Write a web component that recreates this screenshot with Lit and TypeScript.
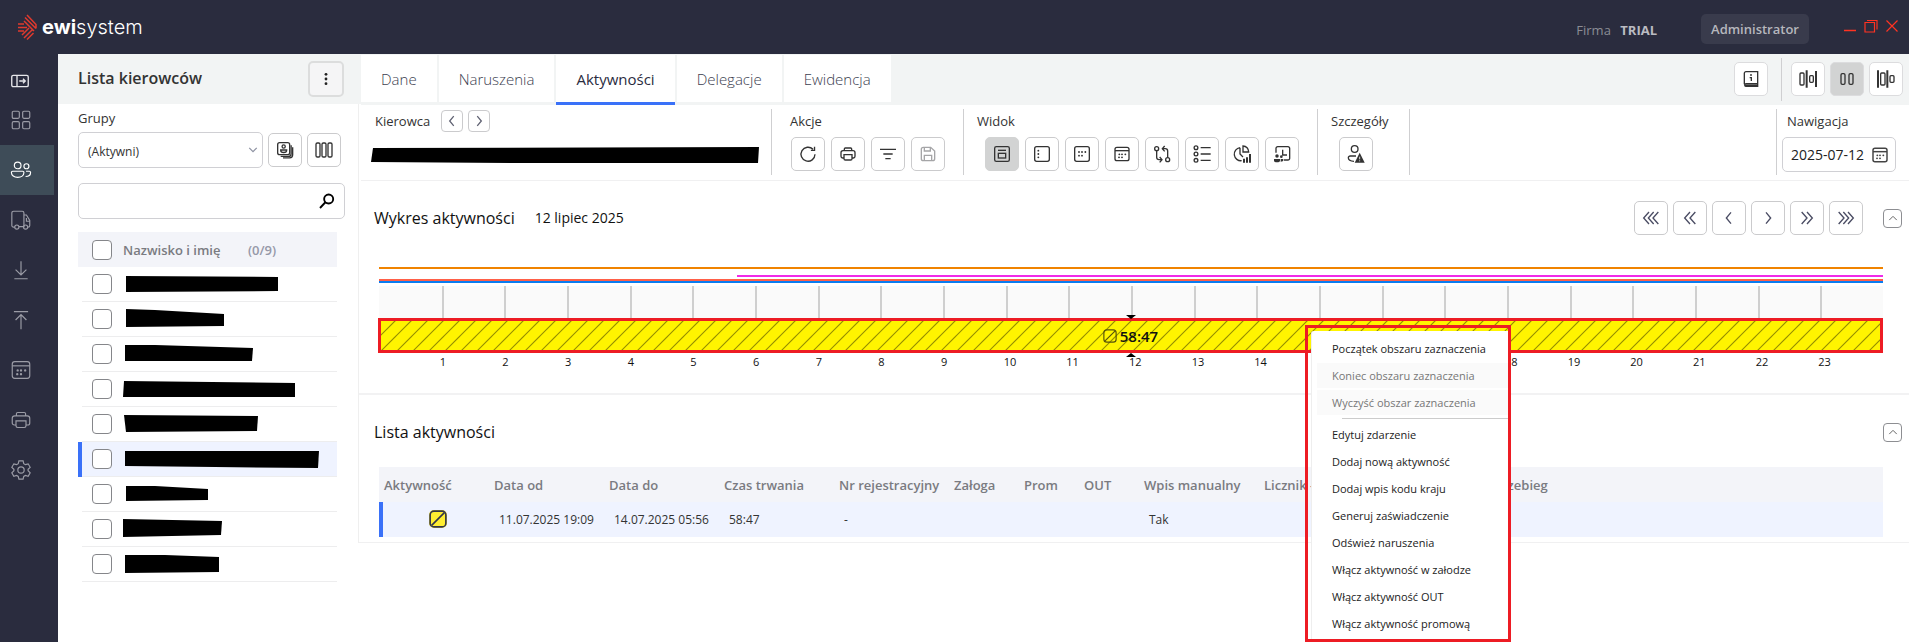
import { LitElement, html, css, svg, type TemplateResult } from "lit";
import { customElement, property, state } from "lit/decorators.js";
import { classMap } from "lit/directives/class-map.js";

/* Icon artwork, drawn on a 24 x 24 grid. */
const icons: Record<string, TemplateResult> = {
  expand: svg`<rect x="1" y="4.500" width="22" height="15" rx="2"/><path d="M8 4.500v15M11 12h8M16 9l3 3-3 3"/>`,
  grid: svg`<rect x="1.500" y="1.500" width="8.500" height="8.500" rx="1.500"/><rect x="14" y="1.500" width="8.500" height="8.500" rx="1.500"/><rect x="1.500" y="14" width="8.500" height="8.500" rx="1.500"/><rect x="14" y="14" width="8.500" height="8.500" rx="1.500"/>`,
  people: svg`<circle cx="8" cy="6.500" r="4"/><circle cx="18.500" cy="7.500" r="3"/><path d="M2 13.500h12a1.500 1.500 0 0 1 1.500 1.500c0 3.500-3.200 5.800-7.500 5.800S.5 18.500.5 15A1.500 1.500 0 0 1 2 13.500zM18 13.500h4a1.500 1.500 0 0 1 1.500 1.500c0 3-2.200 4.800-6 4.800"/>`,
  truck: svg`<path d="M4.500 20.500H3a2 2 0 0 1-2-2v-15a2 2 0 0 1 2-2h10.500a2 2 0 0 1 2 2v16.500H9.500M15.500 6h3l4 6.500v6a2 2 0 0 1-2 2M18.500 9.500v4h4"/><circle cx="7" cy="20.500" r="2.500"/><circle cx="17.500" cy="20.500" r="2.500"/>`,
  download: svg`<path d="M12 1.500v16M5.500 11.500l6.500 6.500 6.500-6.500M4 22.500h16"/>`,
  upload: svg`<path d="M12 23V6M5.500 12L12 5.500l6.500 6.500M3.500 2h17"/>`,
  calendar: svg`<rect x="1.500" y="2" width="21" height="20" rx="3"/><path d="M1.500 7h21"/><path class="dots" d="M8 12.500h.01M12 12.500h.01M17 12.500h.01M7.500 17h.01M12 17h.01"/>`,
  printer: svg`<path d="M6.500 7V4.500a1.500 1.500 0 0 1 1.500-1.500h8a1.500 1.500 0 0 1 1.500 1.500V7M6 18H4a2.500 2.500 0 0 1-2.500-2.500V10a3 3 0 0 1 3-3h15a3 3 0 0 1 3 3v5.500A2.500 2.500 0 0 1 20 18h-2"/><path d="M6 13h12v6a2 2 0 0 1-2 2H8a2 2 0 0 1-2-2z"/>`,
  gear: svg`<circle cx="12" cy="12" r="3.800"/><path d="M9.500 1h5l.8 3.400 2 1.200 3.300-1 2.400 4.200-2.500 2.300v1.800l2.500 2.400-2.400 4.200-3.300-1-2 1.200-.8 3.300h-5l-.8-3.300-2-1.200-3.300 1L1 15.300l2.500-2.400v-1.800L1 8.800l2.400-4.200 3.300 1 2-1.200z"/>`,
  kebab: svg`<g class="solid"><circle cx="12" cy="4" r="2.400"/><circle cx="12" cy="12" r="2.400"/><circle cx="12" cy="20" r="2.400"/></g>`,
  card: svg`<rect x="1" y="1" width="18" height="18" rx="3"/><circle cx="10" cy="6.800" r="2.400"/><path d="M5.500 12h9c0 2.600-2 3.800-4.500 3.800s-4.500-1.200-4.500-3.800zM21.200 5v12.500a4 4 0 0 1-4 4H5.500M23.500 8v11a4.800 4.800 0 0 1-4.500 4.800H9"/>`,
  columns: svg`<rect x="0" y="1.500" width="6" height="21" rx="2"/><rect x="9" y="1.500" width="6" height="21" rx="2"/><rect x="18" y="1.500" width="6" height="21" rx="2"/>`,
  search: svg`<circle cx="14.500" cy="9" r="6.800"/><path d="M10 13.500L1.500 22.500"/>`,
  left: svg`<path d="M15 3.500L8 12l7 8.500"/>`,
  right: svg`<path d="M9 3.500l7 8.500-7 8.500"/>`,
  left2: svg`<path d="M12 3L4 12l8 9M20 3l-8 9 8 9"/>`,
  right2: svg`<path d="M4 3l8 9-8 9M12 3l8 9-8 9"/>`,
  left3: svg`<path d="M9 3L1 12l8 9M16 3l-8 9 8 9M23 3l-8 9 8 9"/>`,
  right3: svg`<path d="M1 3l8 9-8 9M8 3l8 9-8 9M15 3l8 9-8 9"/>`,
  up: svg`<path d="M3 17l9-9 9 9"/>`,
  refresh: svg`<path d="M22.500 12.500A10.500 10.500 0 1 1 19.500 5M21.800 1v5.500h-5.500"/>`,
  filter: svg`<path d="M0 5h24M5 12h14M8 19h8"/>`,
  save: svg`<path d="M2 5a3 3 0 0 1 3-3h11l6 5.500V19a3 3 0 0 1-3 3H5a3 3 0 0 1-3-3zM6.500 2.500v5h9v-5M6.500 22v-8h11v8"/>`,
  panel: svg`<rect x="1" y="1" width="22" height="22" rx="2.500"/><rect x="6.500" y="11" width="11" height="7"/><path d="M6 6.500h12"/>`,
  sidebar: svg`<rect x="1" y="1" width="22" height="22" rx="3"/><path class="dots" d="M6.500 7h.01M6.500 12h.01M6.500 17h.01"/>`,
  dotbox: svg`<rect x="1" y="1" width="22" height="22" rx="3"/><path class="dots" d="M7.500 9h.01M12 9h.01M17 9h.01M7.500 14.500h.01M12 14.500h.01"/>`,
  route: svg`<circle cx="4" cy="4" r="3"/><circle cx="20.500" cy="20.500" r="3"/><path d="M4 7v10a3.500 3.500 0 0 0 3.500 3.500h4M8.500 16.500l3.500 4-3.500 4M20.500 17.500V7.500A3.500 3.500 0 0 0 17 4h-4M16 0l-3.500 4L16 8"/>`,
  list: svg`<circle cx="3" cy="2.500" r="2.800"/><circle cx="3" cy="12" r="2.800"/><circle cx="3" cy="21.500" r="2.800"/><path d="M10 2.500h15M10 12h15M10 21.500h15"/>`,
  report: svg`<path d="M9 2.500A9.800 9.800 0 1 0 11.500 22M9 2.500V12l4.500 4.500"/><path d="M13.500 0C18.500 0 22 4 22 9h-8.500z"/><path class="bold" d="M15 25v-6M19.500 25v-8M24 25V12"/>`,
  clockpeople: svg`<path d="M3 10V3.500A2.500 2.500 0 0 1 5.500 1H21a2.500 2.500 0 0 1 2.500 2.500v15A2.500 2.500 0 0 1 21 21h-6M13 5.500v8h6.500"/><g class="solid"><circle cx="4.500" cy="15" r="2.600"/><circle cx="11" cy="16" r="2"/><path d="M0 19.500h9V22c0 3-9 3-9 0zM10 19.500h4v2c0 1.500-1.500 2-4 2z"/></g>`,
  alertuser: svg`<circle cx="10" cy="4.500" r="5"/><path d="M12 15H3.500A2.800 2.800 0 0 0 .5 17.800C.5 21.500 4 23 9 23"/><path class="solid" d="M17.500 10L25 25H10z"/><path d="M17.500 16v4M17.500 21.500v1.500" stroke="#fff" stroke-width="1.200"/>`,
  info: svg`<path d="M2 20V3.500A2.500 2.500 0 0 1 4.500 1H22v18H4.500a2 2 0 0 0 0 4H22v-4M10 10h2.500v5"/><path class="dots" d="M12 6h.01"/><path class="bold" d="M3 21.500h19"/>`,
  split1: svg`<rect x="0" y="3" width="6" height="18" rx="1.500"/><path class="bold" d="M10 -1v26M24 0v24"/><rect x="14.500" y="7" width="5.500" height="10" rx="1.500"/>`,
  split2: svg`<rect x="3" y="4" width="6" height="16" rx="2"/><rect x="15" y="4" width="6" height="16" rx="2"/>`,
  split3: svg`<path class="bold" d="M0 -1v26M14 -1v26"/><rect x="4" y="3" width="6.500" height="18" rx="1.500"/><rect x="18" y="7" width="6" height="10" rx="1.500"/>`,
  rest: svg`<rect x="1.500" y="1.500" width="21" height="21" rx="5"/><path d="M3.500 20.500l17-17"/>`,
  minimize: svg`<path class="bold" d="M0 21h24"/>`,
  restore: svg`<path d="M0 5h19v19H0z"/><path d="M4 1h20v18"/>`,
  close: svg`<path d="M1 1l22 22M23 1L1 23"/>`,
};

@customElement("ewi-icon")
class EwiIcon extends LitElement {
  @property() name = "";
  static styles = css`
    :host { display: inline-flex; width: var(--icon, 18px); height: var(--icon, 18px); flex: none; }
    svg { width: 100%; height: 100%; overflow: visible; fill: none; stroke: currentColor; stroke-width: var(--stroke, 2); }
    .dots { stroke-width: 2.800; stroke-linecap: round; }
    .bold { stroke-width: 3; }
    .solid { fill: currentColor; stroke: none; }
  `;
  render() {
    return html`<svg viewBox="0 0 24 24" aria-hidden="true">${icons[this.name]}</svg>`;
  }
}

const sideItems = [
  ["expand", "Rozwiń"], ["grid", "Pulpit"], ["people", "Kierowcy"], ["truck", "Pojazdy"], ["download", "Pobierz"],
  ["upload", "Wyślij"], ["calendar", "Kalendarz"], ["printer", "Wydruki"], ["gear", "Ustawienia"],
];
const tabs = ["Dane", "Naruszenia", "Aktywności", "Delegacje", "Ewidencja"];
/* Blacked-out names: polygon corners inside each list row. */
const drivers = [
  "1,9 153,10 153,24 1,25",
  "1,7 30,8 99,12 99,24 1,25",
  "0,8 30,8 128,11 127,24 0,24",
  "-1,9 170,11 170,25 -2,25",
  "-1,8 133,9 132,24 1,25",
  "0,9 194,9 193,26 90,25 0,24",
  "1,9 30,9 83,12 83,23 1,24",
  "-2,7 97,9 96,23 -2,25",
  "0,8 40,8 94,10 94,25 0,26",
];
const actions = [["refresh", "Odśwież"], ["printer", "Drukuj"], ["filter", "Filtruj"], ["save", "Zapisz"]];
const views = ["panel", "sidebar", "dotbox", "calendar", "route", "list", "report", "clockpeople"];
const hours = Array.from({ length: 24 }, (_, i) => i);
const headings = ["Aktywność", "Data od", "Data do", "Czas trwania", "Nr rejestracyjny", "Załoga", "Prom", "OUT", "Wpis manualny", "Licznik –", "", "Przebieg"];
const cells = ["11.07.2025 19:09", "14.07.2025 05:56", "58:47", "-", "", "", "", "Tak", "", "", ""];
const menu = [
  { text: "Początek obszaru zaznaczenia" },
  { text: "Koniec obszaru zaznaczenia", off: true },
  { text: "Wyczyść obszar zaznaczenia", off: true, end: true },
  { text: "Edytuj zdarzenie" },
  { text: "Dodaj nową aktywność" },
  { text: "Dodaj wpis kodu kraju" },
  { text: "Generuj zaświadczenie" },
  { text: "Odśwież naruszenia" },
  { text: "Włącz aktywność w załodze" },
  { text: "Włącz aktywność OUT" },
  { text: "Włącz aktywność promową" },
];

@customElement("app-root")
class AppRoot extends LitElement {
  @state() private tab = 2;
  @state() private view = 0;

  static styles = css`
    :host {
      display: flex; flex-direction: column; position: relative; min-height: 100vh; background: #fff; color: #222;
      font-family: "Open Sans", "Noto Sans", sans-serif; font-size: 13px; line-height: 20px;
    }
    *, *::before, *::after { box-sizing: border-box; }
    button, input, select { font: inherit; color: inherit; margin: 0; }
    button { padding: 0; border: 0; background: none; display: flex; align-items: center; justify-content: center; }
    h1, h2 { margin: 0; font-weight: 400; }
    .top { height: 54px; background: #2a2c3e; display: flex; align-items: center; padding: 0 11px 0 17px; }
    .logo { display: flex; align-items: center; gap: 5px; flex: 1; color: #fff; font: 300 20px/24px Inter, sans-serif; }
    .logo svg { width: 20px; height: 26px; stroke: #e03a2e; stroke-width: 1.500; fill: none; }
    .logo b { font-weight: 700; }
    .firm { color: #8b8c95; padding-top: 6px; margin-right: 44px; }
    .firm b { color: #bbbcc2; margin-left: 6px; font-weight: 700; }
    .admin { height: 30px; width: 108px; border-radius: 5px; background: #393b4c; color: #b6b7bd; font-weight: 600; margin: 4px 34px 0 0; }
    .wins { display: flex; gap: 8px; margin-top: -2px; color: #ff3322; --icon: 12px; --stroke: 2.400; }
    .wins button { width: 13px; height: 13px; }

    .body { display: flex; flex: 1; }
    .side { width: 58px; background: #2a2c3e; color: #9b9ca6; flex: none; display: flex; flex-direction: column; padding-top: 2px; --icon: 20px; --stroke: 1.400; }
    .side button { width: 54px; height: 50px; padding-right: 12px; }
    .side button:first-child { height: 39px; margin-top: 5px; color: #e6e6ea; --icon: 18px; --stroke: 1.800; margin-bottom: -5px; padding-right: 14px; }
    .side .on { background: #3e4c58; color: #fff; }

    .list { width: 303px; flex: none; }
    .listhead { height: 50px; background: #f2f4f4; display: flex; align-items: center; justify-content: space-between; padding: 0 17px 0 20px; }
    .listhead h1 { font-size: 16px; font-weight: 600; color: #333; line-height: 24px; padding-bottom: 2px; }
    .kebab { width: 36px; height: 36px; border: 2px solid #dcdddd; border-radius: 5px; background: #f5f5f6; --icon: 14px; }
    .listbody { border-right: 1px solid #efefef; width: 301px; padding: 4px 12px 0 20px; height: 439px; }
    .listbody label { display: block; color: #333; height: 20px; }
    .group { display: grid; grid-template-columns: 185px 34px 34px; gap: 5px; align-items: center; margin-top: 4px; }
    .pick { position: relative; display: flex; }
    .pick select { appearance: none; width: 100%; height: 36px; border: 1px solid #d0d0d4; border-radius: 5px; background: #fff; padding: 3px 9px 0; font-size: 12px; color: #333; }
    .pick ewi-icon { position: absolute; right: 5px; top: 13px; transform: rotate(180deg); color: #8f93a3; --icon: 10px; --stroke: 3; }
    .btn { width: 34px; height: 34px; border: 1px solid #cbcbcd; border-radius: 5px; background: #fff; color: #333; --icon: 16px; }
    .btn.on { background: #d2d3d3; border-color: #d2d3d3; }
    .btn:disabled { color: #a5a5a7; }
    .find { display: flex; align-items: center; height: 36px; margin-top: 15px; border: 1px solid #d0d0d4; border-radius: 5px; width: 267px; padding-right: 9px; color: #000; --icon: 16px; --stroke: 2.800; }
    .find input { border: 0; outline: 0; background: none; flex: 1; min-width: 0; height: 30px; padding: 0 9px; }
    .names { border-collapse: separate; border-spacing: 0; table-layout: fixed; width: 259px; margin-top: 13px; }
    .names th, .names td { height: 35px; padding: 0; text-align: left; }
    .names th { background: #f3f4f9; color: #7a7b81; font-weight: 600; }
    .names .count { color: #9698a8; width: 89px; }
    .names td + td { border-bottom: 1px solid #ededee; }
    .names .mark { width: 4px; }
    .names .tick { width: 41px; padding-left: 10px; }
    .names .sel td { background: #eff3ff; }
    .names .sel .mark { background: #3a71f8; }
    .names svg { display: block; width: 100%; height: 34px; overflow: visible; }
    .tick input { appearance: none; display: block; width: 20px; height: 20px; border: 1px solid #85868a; border-radius: 4px; background: #fff; }

    .main { flex: 1; min-width: 0; }
    .tabs { height: 50px; background: #f2f4f4; display: flex; align-items: center; padding-right: 6px; }
    .tablist { display: flex; gap: 2px; align-self: flex-start; flex: 1; padding-top: 1px; }
    .tablist button { height: 47px; background: #fff; padding: 0 20px; color: #3c3e50; font-size: 15px; font-weight: 300; }
    .tablist .on { height: 50px; border-bottom: 3px solid #3a71f8; font-weight: 400; color: #2a2c3e; }
    .rule { width: 1px; background: #cfcfd1; align-self: stretch; }
    .tabs .rule { margin: 4px 9px 3px 13px; }
    .tabs .btn { border-color: #dcdcde; }
    .splits { display: flex; gap: 5px; }
    .tools { height: 77px; border-top: 1px solid #f2f4f4; display: flex; padding: 4px 13px 5px 10px; border-bottom: 1px solid #f0f0f1; }
    .tool { display: flex; flex-direction: column; }
    .cap { height: 24px; display: flex; align-items: center; gap: 5px; color: #333; }
    .cap span { margin-right: 6px; }
    .mini { width: 22px; height: 22px; border: 1px solid #cbcbcd; border-radius: 4px; --icon: 14px; color: #5f6172; --stroke: 2.200; }
    .row { display: flex; gap: 6px; margin-top: 4px; }
    .driver { width: 400px; padding-left: 4px; }
    .driver svg { display: block; width: 390px; height: 18px; margin: 13px 0 0 -4px; }
    .act { padding: 0 18px 0 18px; }
    .act .row { padding-left: 1px; }
    .wid { padding: 0 18px 0 13px; }
    .wid .row { padding-left: 8px; }
    .det { width: 91px; padding-left: 13px; }
    .det .row { padding-left: 8px; }
    .gap { flex: 1; }
    .nav { padding-left: 5px; }
    .nav .cap { padding-left: 5px; }
    .date { display: flex; align-items: center; width: 114px; height: 35px; border: 1px solid #d0d0d4; border-radius: 5px; margin-top: 4px; padding-right: 7px; color: #444; --icon: 16px; --stroke: 2.200; }
    .date input { border: 0; outline: 0; background: none; flex: 1; min-width: 0; padding: 0 0 0 8px; font-size: 14px; color: #222; }

    .sec { margin-left: -2px; padding: 0 26px 0 20px; }
    .sechead { display: flex; align-items: center; color: #111; margin: 0 -19px 0 -5px; }
    .sechead h2 { font-size: 16px; line-height: 24px; }
    .day { font-size: 14px; margin-left: 20px; }
    .jump { display: flex; gap: 5px; margin: 0 20px 0 auto; }
    .jump .btn { color: #4a4c63; }
    .fold { width: 19px; height: 19px; border: 1px solid #8d8e92; border-radius: 4px; --icon: 10px; --stroke: 2.400; color: #666; }
    .chartsec { height: 214px; padding-top: 20px; border-bottom: 2px solid #f2f2f3; }
    .chart { position: relative; margin-top: 32px; }
    .line { height: 2px; }
    .orange { background: #f08300; }
    .pink { background: #f02ae8; margin: 6px 0 2px; }
    .red { background: #ff6048; }
    .blue { background: #0a7cf0; margin-bottom: 3px; }
    .scale { display: grid; grid-template-columns: repeat(24, 1fr); }
    .ticks { height: 32px; background: #fafafa; }
    .ticks i + i { border-left: 2px solid #cfcfcf; }
    .span { position: relative; height: 35px; border: 3px solid #ed1c24; background: #fff400; margin-left: -1px; }
    .span svg { display: block; width: 100%; height: 29px; }
    .dur { position: absolute; inset: 0; display: flex; align-items: center; justify-content: center; gap: 3px; color: #111; font-size: 15px; font-weight: 600; --icon: 14px; }
    .dur ewi-icon { color: #55520a; }
    .arrow { position: absolute; left: 50%; margin-left: -5px; border: 5px solid transparent; }
    .arrow.a { top: 48px; border-top-color: #000; border-bottom: 0; border-top-width: 4px; }
    .arrow.b { top: 86px; border-bottom-color: #000; border-top: 0; border-bottom-width: 4px; }
    .nums { font-size: 11px; line-height: 16px; color: #111; margin: 1px 2px 0 -2px; }
    .listsec { padding-top: 25px; padding-bottom: 5px; border-bottom: 1px solid #f0f0f1; }
    .acts { width: 100%; margin-top: 23px; border-collapse: separate; border-spacing: 0; table-layout: fixed; }
    .acts th, .acts td { height: 35px; text-align: left; white-space: nowrap; overflow: visible; }
    .acts th { padding: 0 0 0 5px; background: #f3f4f9; color: #7a7b81; font-weight: 600; }
    .acts td { padding: 1px 0 0 10px; background: #eff3ff; color: #333; font-size: 12px; }
    .acts td:first-child { border-left: 4px solid #3a71f8; padding: 0 0 0 46px; }
    .acts .chip { display: block; background: #ffee32; border-radius: 5px; color: #33354a; --icon: 18px; --stroke: 2.200; margin-bottom: 2px; }
    .c60 { width: 60px; } .c70 { width: 70px; } .c110 { width: 110px; } .c115 { width: 115px; } .c120 { width: 120px; }

    .menu { position: absolute; left: 1305px; top: 325px; width: 206px; border: 3px solid #ed1c24; padding: 3px 0 0 3px; }
    .menu ul { list-style: none; margin: 0; padding: 5px 0 1px 5px; background: #fff; border-left: 1px solid #eee; border-top-left-radius: 3px; }
    .menu button { width: 100%; height: 25px; margin-bottom: 2px; padding-left: 15px; justify-content: flex-start; font-size: 11px; color: #222; }
    .menu button:disabled { background: #fafafa; color: #777; }
    .menu .end { border-bottom: 1px solid #ccc; margin: 0 0 3px 25px; height: 2px; }
  `;

  private iconBtn(name: string, label: string, cls = "btn", off = false) {
    return html`<button class=${cls} aria-label=${label} ?disabled=${off}><ewi-icon name=${name}></ewi-icon></button>`;
  }

  private top() {
    return html`<header class="top">
      <div class="logo">
        <svg viewBox="0 0 20 26"><path d="M10 1l9 9.500v4M8 3.500l11 11M7 7l10 10M10 25.500l6.500-6.500M7 24l9-9M5 21l7-7M1 10h6M1 13.500h9M1 17h6"/></svg>
        <span><b>ewi</b>system</span>
      </div>
      <div class="firm">Firma <b>TRIAL</b></div>
      <button class="admin">Administrator</button>
      <div class="wins">${this.iconBtn("minimize", "Minimalizuj", "win")}${this.iconBtn("restore", "Przywróć", "win")}${this.iconBtn("close", "Zamknij", "win")}</div>
    </header>`;
  }

  private list() {
    return html`<section class="list">
      <div class="listhead"><h1>Lista kierowców</h1>${this.iconBtn("kebab", "Więcej", "kebab")}</div>
      <div class="listbody">
        <label for="grp">Grupy</label>
        <div class="group">
          <div class="pick"><select id="grp"><option>(Aktywni)</option></select><ewi-icon name="up"></ewi-icon></div>
          ${this.iconBtn("card", "Karty")}${this.iconBtn("columns", "Kolumny")}
        </div>
        <div class="find"><input type="text" aria-label="Szukaj" /><button aria-label="Szukaj"><ewi-icon name="search"></ewi-icon></button></div>
        <table class="names">
          <thead><tr>
            <th class="mark"></th><th class="tick"><input type="checkbox" aria-label="Zaznacz wszystkich" /></th>
            <th>Nazwisko i imię</th><th class="count">(0/9)</th>
          </tr></thead>
          <tbody>${drivers.map((p, i) => html`<tr class=${classMap({ sel: i === 5 })}>
            <td class="mark"></td><td class="tick"><input type="checkbox" aria-label=${`Kierowca ${i + 1}`} /></td>
            <td colspan="2"><svg aria-hidden="true"><polygon points=${p} transform="translate(2 0)" /></svg></td>
          </tr>`)}</tbody>
        </table>
      </div>
    </section>`;
  }

  private tools() {
    return html`<div class="tools">
      <div class="tool driver">
        <div class="cap"><span>Kierowca</span>${this.iconBtn("left", "Poprzedni", "mini")}${this.iconBtn("right", "Następny", "mini")}</div>
        <svg aria-hidden="true"><polygon points="2,2 388,1 387,17 150,17 0,16" /></svg>
      </div>
      <i class="rule"></i>
      <div class="tool act"><div class="cap">Akcje</div><div class="row">${actions.map(([n, l]) => this.iconBtn(n, l, "btn", n === "save"))}</div></div>
      <i class="rule"></i>
      <div class="tool wid"><div class="cap">Widok</div><div class="row">${views.map((n, i) => html`<button
        class=${classMap({ btn: true, on: i === this.view })} aria-label=${`Widok ${i + 1}`} @click=${() => (this.view = i)}><ewi-icon name=${n}></ewi-icon></button>`)}</div></div>
      <i class="rule"></i>
      <div class="tool det"><div class="cap">Szczegóły</div><div class="row">${this.iconBtn("alertuser", "Szczegóły")}</div></div>
      <i class="rule"></i>
      <div class="gap"></div>
      <i class="rule"></i>
      <div class="tool nav"><label class="cap" for="date">Nawigacja</label>
        <div class="date"><input id="date" type="text" .value=${"2025-07-12"} /><button aria-label="Kalendarz"><ewi-icon name="calendar"></ewi-icon></button></div></div>
    </div>`;
  }

  private chart() {
    return html`<section class="sec chartsec">
      <div class="sechead"><h2>Wykres aktywności</h2><span class="day">12 lipiec 2025</span>
        <div class="jump">${["left3", "left2", "left", "right", "right2", "right3"].map((n) => this.iconBtn(n, n.startsWith("l") ? "Wstecz" : "Dalej"))}</div>
        ${this.iconBtn("up", "Zwiń", "fold")}</div>
      <div class="chart">
        <div class="line orange"></div>
        <div class="line pink" style="margin-left:${(5.713 / 24) * 100}%"></div>
        <div class="line red"></div><div class="line blue"></div>
        <div class="scale ticks">${hours.map(() => html`<i></i>`)}</div>
        <div class="span">
          <svg aria-hidden="true"><defs><pattern id="hatch" width="16" height="16" patternUnits="userSpaceOnUse">
            <path d="M-1 15L15 -1M13 17L17 13" stroke="#958e00" stroke-width="1.200" /></pattern></defs>
            <rect width="100%" height="100%" fill="url(#hatch)" /></svg>
          <div class="dur"><ewi-icon name="rest"></ewi-icon>58:47</div>
        </div>
        <i class="arrow a"></i><i class="arrow b"></i>
        <div class="scale nums">${hours.map((h) => html`<span>${h || ""}</span>`)}</div>
      </div>
    </section>`;
  }

  private table() {
    const widths = ["c110", "c115", "c115", "c115", "c115", "c70", "c60", "c60", "c120", "c115", "c115", ""];
    return html`<section class="sec listsec">
      <div class="sechead"><h2>Lista aktywności</h2><div class="gap"></div>${this.iconBtn("up", "Zwiń", "fold")}</div>
      <table class="acts">
        <thead><tr>${headings.map((h, i) => html`<th class=${widths[i]}>${h}</th>`)}</tr></thead>
        <tbody><tr><td><ewi-icon class="chip" name="rest"></ewi-icon></td>${cells.map((c) => html`<td>${c}</td>`)}</tr></tbody>
      </table>
    </section>`;
  }

  render() {
    return html`${this.top()}
      <div class="body">
        <nav class="side">${sideItems.map(([n, l], i) => this.iconBtn(n, l, i === 2 ? "on" : ""))}</nav>
        ${this.list()}
        <main class="main">
          <div class="tabs">
            <div class="tablist">${tabs.map((t, i) => html`<button class=${classMap({ on: i === this.tab })} @click=${() => (this.tab = i)}>${t}</button>`)}</div>
            ${this.iconBtn("info", "Pomoc")}
            <i class="rule"></i>
            <div class="splits">${this.iconBtn("split1", "Układ lewy")}${this.iconBtn("split2", "Układ równy", "btn on")}${this.iconBtn("split3", "Układ prawy")}</div>
          </div>
          ${this.tools()}${this.chart()}${this.table()}
        </main>
      </div>
      <div class="menu"><ul>${menu.map((m) => html`<li><button ?disabled=${!!m.off}>${m.text}</button></li>${m.end ? html`<li class="end"></li>` : ""}`)}</ul></div>`;
  }
}
